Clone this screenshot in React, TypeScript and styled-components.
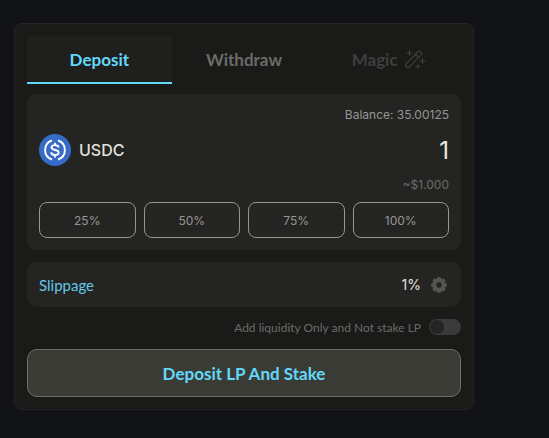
import React, { useState } from "react";
import styled, { createGlobalStyle } from "styled-components";

const numeric = `Inter, "Open Sans", sans-serif`;

const GlobalStyle = createGlobalStyle`
  * { box-sizing: border-box; }
  body {
    margin: 0;
    background: #121316;
    font-family: Lato, "Open Sans", sans-serif;
    color: #e3e3de;
  }
  button, input { font: inherit; }
`;

const Page = styled.main`
  padding: 23px 75px 28px 14px;
`;

const Card = styled.section`
  display: flex;
  flex-direction: column;
  max-width: 600px;
  padding: 12px;
  border: 1px solid #242523;
  border-radius: 8px;
  background: #1a1a18;
`;

const Tabs = styled.div`
  display: grid;
  grid-template-columns: repeat(3, 1fr);
  margin-bottom: 10px;
`;

const Tab = styled.button<{ $active?: boolean; $dim?: boolean }>`
  display: flex;
  align-items: center;
  justify-content: center;
  gap: 6px;
  height: 48px;
  padding: 0;
  border: 0;
  border-bottom: 2px solid ${(p) => (p.$active ? "#62d8fb" : "transparent")};
  border-radius: ${(p) => (p.$active ? "4px 4px 0 0" : "0")};
  background: ${(p) => (p.$active ? "#1f1f1e" : "transparent")};
  color: ${(p) => (p.$active ? "#62d8fb" : p.$dim ? "#3f3f3d" : "#6b6b69")};
  font-size: 17px;
  font-weight: 700;
`;

const Panel = styled.div`
  padding: 12px;
  border-radius: 8px;
  background: #242422;
`;

const Note = styled.div<{ $dim?: boolean }>`
  height: 18px;
  color: ${(p) => (p.$dim ? "#6b6b69" : "#969693")};
  font-family: ${numeric};
  font-size: 12px;
  line-height: 18px;
  text-align: right;
`;

const AssetRow = styled.div`
  display: flex;
  align-items: center;
  height: 52px;
  gap: 8px;
`;

const AssetLabel = styled.label`
  font-family: ${numeric};
  font-size: 16px;
  font-weight: 500;
`;

const Amount = styled.input`
  flex: 1;
  min-width: 0;
  padding: 0;
  border: 0;
  outline: 0;
  background: transparent;
  color: #e8e8e4;
  font-family: ${numeric};
  font-size: 24px;
  text-align: right;
`;

const Presets = styled.div`
  display: grid;
  grid-template-columns: repeat(4, 1fr);
  gap: 8px;
  margin-top: 8px;
`;

const Preset = styled.button`
  height: 36px;
  padding: 0;
  border: 1px solid #969693;
  border-radius: 8px;
  background: transparent;
  color: #969693;
  font-family: ${numeric};
  font-size: 12px;
`;

const SlippageRow = styled.div`
  display: flex;
  align-items: center;
  height: 45px;
  margin-top: 12px;
  padding: 0 12px;
  border-radius: 10px;
  background: #242422;
`;

const SlippageName = styled.span`
  flex: 1;
  color: #62c8e8;
  font-size: 15px;
`;

const SlippageValue = styled.span`
  font-family: ${numeric};
  font-size: 14px;
`;

const IconButton = styled.button`
  display: flex;
  margin-left: 8px;
  padding: 0 2px;
  border: 0;
  background: transparent;
  color: #555553;
`;

const ToggleRow = styled.label`
  display: flex;
  align-items: center;
  justify-content: flex-end;
  gap: 8px;
  height: 16px;
  margin: 12px 0 14px;
  color: #6b6b69;
  font-size: 12px;
`;

const Switch = styled.input`
  appearance: none;
  display: flex;
  align-items: center;
  width: 32px;
  height: 16px;
  margin: 0;
  padding: 0 1px;
  border-radius: 8px;
  background: #3a3a3a;

  &::before {
    content: "";
    width: 14px;
    height: 14px;
    border-radius: 50%;
    background: #242422;
  }
  &:checked { justify-content: flex-end; }
`;

const Submit = styled.button`
  height: 48px;
  border: 1px solid #6b6b69;
  border-radius: 10px;
  background: #3b3b35;
  color: #62d8fb;
  font-size: 17px;
  font-weight: 700;
`;

const WandIcon = () => (
  <svg width="22" height="20" viewBox="0 0 22 20" fill="none" stroke="currentColor" strokeWidth="1.2" strokeLinecap="round" strokeLinejoin="round" aria-hidden="true">
    <path d="M1.800 15.400 14.200 2.500q1-1 2 0l1.200 1.200q1 1 0 2L4.900 18.300q-.8.8-1.600 0L1.800 17q-.8-.8 0-1.600z" />
    <path d="m11.500 5.500 3 3" />
    <path d="M5.500 1.500v5M3 4h5M18.500 9.500v5M16 12h5M13.800 15.500v4M11.800 17.500h4" />
  </svg>
);

const UsdcIcon = () => (
  <svg width="32" height="32" viewBox="0 0 32 32" aria-hidden="true">
    <circle cx="16" cy="16" r="16" fill="#376bc8" />
    <g fill="none" stroke="#fff" strokeWidth="1.900">
      <path d="M13 6.500a10 10 0 0 0 0 19M19 6.500a10 10 0 0 1 0 19" />
      <path d="M19.600 13.600c0-1.700-1.500-2.500-3.600-2.500s-3.500.9-3.500 2.400c0 3.500 7.200 1.400 7.200 5 0 1.600-1.500 2.500-3.700 2.500s-3.800-.9-3.800-2.700M16 8.800v2.300M16 21v2.400" />
    </g>
  </svg>
);

const GearIcon = () => (
  <svg width="16" height="16" viewBox="0 0 16 16" aria-hidden="true">
    <g fill="none" stroke="currentColor">
      <circle cx="8" cy="8" r="4.700" strokeWidth="4" />
      <path d="M8 .2v3M8 12.800v3M.2 8h3M12.800 8h3M2.500 2.500l2 2M11.500 11.500l2 2M2.500 13.500l2-2M11.500 4.500l2-2" strokeWidth="3.600" />
    </g>
  </svg>
);

const presets = [25, 50, 75, 100];

export default function App() {
  const [amount, setAmount] = useState("1");
  const [onlyAdd, setOnlyAdd] = useState(false);

  return (
    <Page>
      <GlobalStyle />
      <Card>
        <Tabs role="tablist">
          <Tab role="tab" aria-selected="true" $active>Deposit</Tab>
          <Tab role="tab" aria-selected="false">Withdraw</Tab>
          <Tab role="tab" aria-selected="false" $dim>Magic <WandIcon /></Tab>
        </Tabs>
        <Panel>
          <Note>Balance: 35.00125</Note>
          <AssetRow>
            <UsdcIcon />
            <AssetLabel htmlFor="amount">USDC</AssetLabel>
            <Amount id="amount" inputMode="decimal" value={amount} onChange={(e) => setAmount(e.target.value)} />
          </AssetRow>
          <Note $dim>~$1.000</Note>
          <Presets>
            {presets.map((p) => (
              <Preset key={p} onClick={() => setAmount(String((35.00125 * p) / 100))}>{p}%</Preset>
            ))}
          </Presets>
        </Panel>
        <SlippageRow>
          <SlippageName>Slippage</SlippageName>
          <SlippageValue>1%</SlippageValue>
          <IconButton aria-label="Slippage settings"><GearIcon /></IconButton>
        </SlippageRow>
        <ToggleRow>
          Add liquidity Only and Not stake LP
          <Switch type="checkbox" role="switch" checked={onlyAdd} onChange={(e) => setOnlyAdd(e.target.checked)} />
        </ToggleRow>
        <Submit>Deposit LP And Stake</Submit>
      </Card>
    </Page>
  );
}
